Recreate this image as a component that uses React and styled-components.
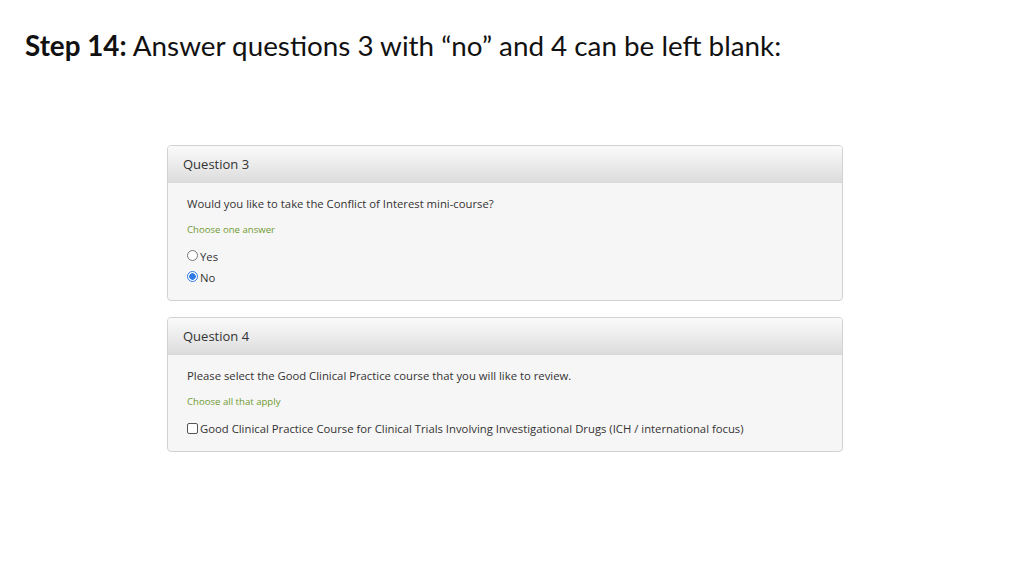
import React from "react";
import styled, { createGlobalStyle } from "styled-components";

const Global = createGlobalStyle`
  html, body {
    margin: 0;
    padding: 0;
    background: #fff;
  }
  body {
    width: 1024px;
    height: 576px;
    overflow: hidden;
  }
`;

const App = () => {
    return (
        <>
            <Global />
            <Page>
                <Title>
                    <b>Step 14:</b> Answer questions 3 with “no” and 4 can be left blank:
                </Title>
                <Cards>
                    <Card>
                        <CardHead>Question 3</CardHead>
                        <CardBody>
                            <Prompt>Would you like to take the Conflict of Interest mini-course?</Prompt>
                            <Hint>Choose one answer</Hint>
                            <Options>
                                <Option>
                                    <Radio />
                                    Yes
                                </Option>
                                <Option>
                                    <Radio checked />
                                    No
                                </Option>
                            </Options>
                        </CardBody>
                    </Card>
                    <Card>
                        <CardHead>Question 4</CardHead>
                        <CardBody>
                            <Prompt>Please select the Good Clinical Practice course that you will like to review.</Prompt>
                            <Hint>Choose all that apply</Hint>
                            <Options>
                                <Option>
                                    <Check />
                                    Good Clinical Practice Course for Clinical Trials Involving Investigational Drugs (ICH / international focus)
                                </Option>
                            </Options>
                        </CardBody>
                    </Card>
                </Cards>
            </Page>
        </>
    );
};

export default App;

const Page = styled.div`
    width: 1024px;
    height: 576px;
    box-sizing: border-box;
    padding: 27px 0 0 25px;
`;
const Title = styled.h1`
    margin: 0;
    font-family: Lato, "Open Sans", sans-serif;
    font-weight: 400;
    font-size: 27.8px;
    line-height: 38px;
    color: #111;
    b {
        font-weight: 700;
    }
`;
const Cards = styled.div`
    margin: 80px 0 0 142px;
    width: 676px;
    display: flex;
    flex-direction: column;
    gap: 16px;
`;
const Card = styled.div`
    border: 1px solid #d2d2d2;
    border-radius: 4px;
    background: #f7f6f6;
    overflow: hidden;
    font-family: "Open Sans", "Noto Sans", sans-serif;
    color: #333;
`;
const CardHead = styled.div`
    height: 37px;
    box-sizing: border-box;
    padding: 0 0 0 15px;
    display: flex;
    align-items: center;
    font-size: 13px;
    color: #333;
    background: linear-gradient(#fafafa, #ececec 50%, #dcdcdc);
    border-bottom: 1px solid #d8d8d8;
`;
const CardBody = styled.div`
    padding: 13px 19px 14px;
`;
const Prompt = styled.div`
    font-size: 11.3px;
    line-height: 16px;
`;
const Hint = styled.div`
    margin-top: 11px;
    font-size: 9.6px;
    line-height: 14px;
    color: #6f9a32;
`;
const Options = styled.div`
    margin-top: 12px;
    display: flex;
    flex-direction: column;
    gap: 5px;
`;
const Option = styled.label`
    display: flex;
    align-items: center;
    gap: 2px;
    font-size: 11.3px;
    line-height: 16px;
`;
const Radio = styled.span`
    width: 11px;
    height: 11px;
    box-sizing: border-box;
    border-radius: 50%;
    border: 1px solid ${(p) => (p.checked ? "#2f7be6" : "#767676")};
    background: ${(p) =>
        p.checked ? "radial-gradient(circle, #2f7be6 0 3px, #fff 3.5px)" : "#fff"};
    margin-top: -3px;
`;
const Check = styled.span`
    width: 11px;
    height: 11px;
    box-sizing: border-box;
    border-radius: 2px;
    border: 1px solid #555;
    background: #fff;
    margin-top: -2px;
`;
